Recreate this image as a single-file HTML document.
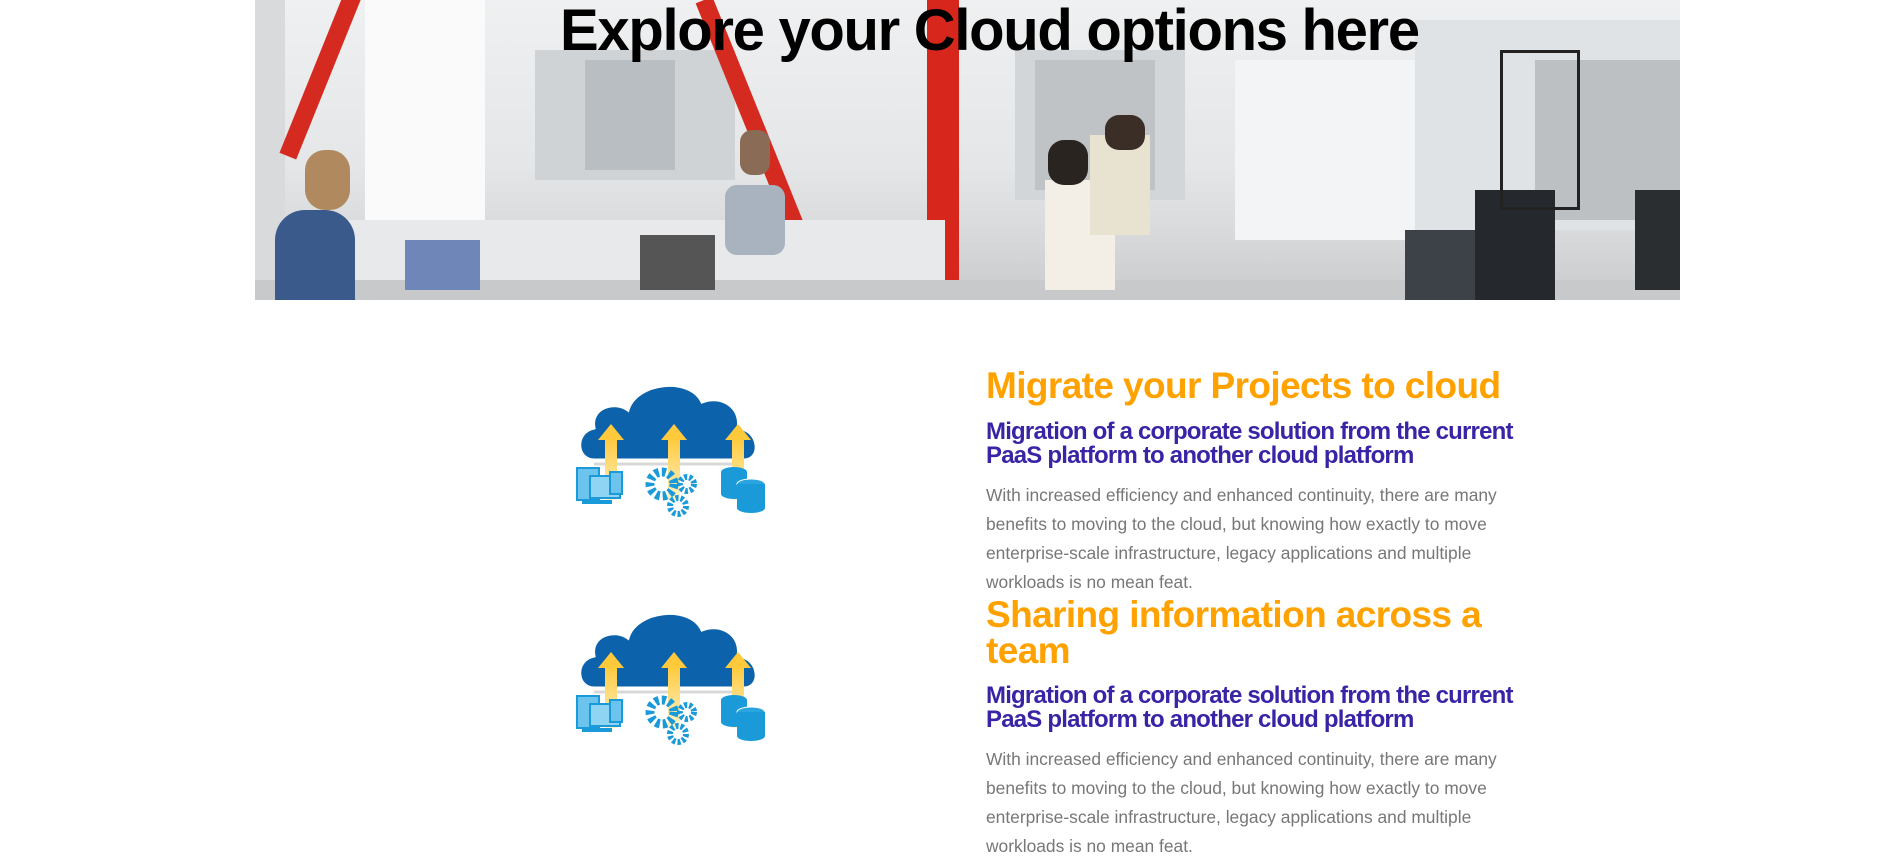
<!DOCTYPE html>
<html><head><meta charset="utf-8"><style>
body{margin:0;width:1897px;height:846px;overflow:hidden;background:#fff;font-family:"Liberation Sans",Arial,sans-serif;position:relative}
.banner{position:absolute;left:255px;top:0;width:1425px;height:300px;overflow:hidden;
background:linear-gradient(180deg,#eef0f1 0%,#e4e6e8 55%,#d9dbdd 75%,#c9cbcd 100%)}
.banner div{position:absolute}
h1{position:absolute;left:560px;top:-3px;margin:0;font-size:58px;font-weight:bold;color:#000;letter-spacing:-1.3px;white-space:nowrap}
.col{position:absolute;left:986px;width:530px}
.h2{color:#ffa200;font-size:37px;font-weight:bold;line-height:36px;margin:0;letter-spacing:-0.6px}
.h3{color:#3a24a6;font-size:24px;font-weight:bold;line-height:24px;margin:0;letter-spacing:-0.8px}
.p{color:#777;font-size:17.4px;line-height:29px;margin:0}
svg.ic{position:absolute}
</style></head><body>
<div class="banner">
 <div style="left:0;top:0;width:30px;height:300px;background:#d8dadc"></div>
 <div style="left:110px;top:0;width:120px;height:230px;background:#fafafa"></div>
 <div style="left:280px;top:50px;width:200px;height:130px;background:#cfd3d6"></div>
 <div style="left:330px;top:60px;width:90px;height:110px;background:#b9bec2"></div>
 <div style="left:760px;top:50px;width:170px;height:150px;background:#d3d6d9"></div>
 <div style="left:780px;top:60px;width:120px;height:130px;background:#bfc3c6"></div>
 <div style="left:980px;top:60px;width:200px;height:180px;background:#f3f4f5"></div>
 <div style="left:1160px;top:20px;width:270px;height:210px;background:#e0e3e5"></div>
 <div style="left:1280px;top:60px;width:150px;height:160px;background:#bcc0c3"></div>
 <div style="left:672px;top:0;width:32px;height:300px;background:#d7261b"></div>
 <div style="left:95px;top:-20px;width:18px;height:190px;background:#d42a20;transform:rotate(22deg);transform-origin:top"></div>
 <div style="left:440px;top:0;width:18px;height:310px;background:#d42a20;transform:rotate(-22deg);transform-origin:top"></div>
 <div style="left:30px;top:220px;width:660px;height:80px;background:#e8e9ea"></div>
 <div style="left:0;top:280px;width:1425px;height:20px;background:#c7c9cb"></div>
 <div style="left:20px;top:210px;width:80px;height:90px;background:#3b5a8c;border-radius:30px 30px 0 0"></div>
 <div style="left:50px;top:150px;width:45px;height:60px;background:#b08a5e;border-radius:20px"></div>
 <div style="left:150px;top:240px;width:75px;height:50px;background:#6f86b8"></div>
 <div style="left:470px;top:185px;width:60px;height:70px;background:#a9b2bf;border-radius:12px"></div>
 <div style="left:485px;top:130px;width:30px;height:45px;background:#8a6b55;border-radius:12px"></div>
 <div style="left:385px;top:235px;width:75px;height:55px;background:#555"></div>
 <div style="left:790px;top:180px;width:70px;height:110px;background:#f3efe6"></div>
 <div style="left:793px;top:140px;width:40px;height:45px;background:#2a2420;border-radius:16px"></div>
 <div style="left:835px;top:135px;width:60px;height:100px;background:#e8e2d1"></div>
 <div style="left:850px;top:115px;width:40px;height:35px;background:#3a2e26;border-radius:14px"></div>
 <div style="left:1150px;top:230px;width:90px;height:70px;background:#3d4248"></div>
 <div style="left:1220px;top:190px;width:80px;height:110px;background:#25292d"></div>
 <div style="left:1380px;top:190px;width:45px;height:100px;background:#2b2e31"></div>
 <div style="left:1245px;top:50px;width:80px;height:160px;border:3px solid #222;box-sizing:border-box"></div>
</div>
<h1>Explore your Cloud options here</h1>

<svg class="ic" style="left:572px;top:376px" width="200" height="145" viewBox="0 0 200 145">
 <defs><linearGradient id="ar" x1="0" y1="0" x2="0" y2="1"><stop offset="0" stop-color="#ffc93c"/><stop offset="1" stop-color="#fff3c8"/></linearGradient></defs>
 <g id="c">
 <path d="M22 84 C4 84 2 56 22 52 C18 32 42 24 56 34 C64 6 118 0 130 26 C150 18 170 32 166 52 C188 54 190 84 172 84 Z" fill="#0d63ab" stroke="#fff" stroke-width="3"/>
 <path d="M22 88 L172 88" stroke="#d8d8d8" stroke-width="3"/>
 <rect x="33" y="62" width="12" height="62" fill="url(#ar)"/><polygon points="26,64 39,48 52,64" fill="#ffc93c"/>
 <rect x="96" y="62" width="12" height="62" fill="url(#ar)"/><polygon points="89,64 102,48 115,64" fill="#ffc93c"/>
 <rect x="160" y="62" width="12" height="62" fill="url(#ar)"/><polygon points="153,64 166,48 179,64" fill="#ffc93c"/>
 <rect x="5" y="92" width="22" height="32" fill="#6cc4ee" stroke="#1a9ad8" stroke-width="2"/>
 <rect x="18" y="100" width="30" height="22" fill="#8fd4f3" stroke="#1a9ad8" stroke-width="2"/>
 <rect x="38" y="96" width="12" height="22" fill="#6cc4ee" stroke="#1a9ad8" stroke-width="2"/>
 <rect x="10" y="124" width="30" height="4" fill="#1a9ad8"/>
 <circle cx="90" cy="108" r="12" fill="none" stroke="#1a9ad8" stroke-width="9" stroke-dasharray="4 3"/>
 <circle cx="115" cy="108" r="7" fill="none" stroke="#1a9ad8" stroke-width="6" stroke-dasharray="3 2"/>
 <circle cx="106" cy="130" r="8" fill="none" stroke="#1a9ad8" stroke-width="6" stroke-dasharray="3 2"/>
 <ellipse cx="162" cy="96" rx="13" ry="5" fill="#1a9ad8"/><rect x="149" y="96" width="26" height="22" fill="#1a9ad8"/><ellipse cx="162" cy="118" rx="13" ry="5" fill="#1a9ad8"/>
 <ellipse cx="179" cy="108" rx="14" ry="5" fill="#2aa5e0" stroke="#fff"/><rect x="165" y="108" width="28" height="24" fill="#1a9ad8"/><ellipse cx="179" cy="132" rx="14" ry="5" fill="#1a9ad8"/>
 </g>
</svg>
<svg class="ic" style="left:572px;top:604px" width="200" height="145" viewBox="0 0 200 145"><use href="#c"/></svg>

<div class="col" style="top:368px">
 <p class="h2">Migrate your Projects to cloud</p>
 <p class="h3" style="margin-top:16px">Migration of a corporate solution from the current PaaS platform to another cloud platform</p>
 <p class="p" style="margin-top:13px">With increased efficiency and enhanced continuity, there are many benefits to moving to the cloud, but knowing how exactly to move enterprise-scale infrastructure, legacy applications and multiple workloads is no mean feat.</p>
 <p class="h2" style="margin-top:0">Sharing information across a team</p>
 <p class="h3" style="margin-top:15px">Migration of a corporate solution from the current PaaS platform to another cloud platform</p>
 <p class="p" style="margin-top:13px">With increased efficiency and enhanced continuity, there are many benefits to moving to the cloud, but knowing how exactly to move enterprise-scale infrastructure, legacy applications and multiple workloads is no mean feat.</p>
</div>
</body></html>
